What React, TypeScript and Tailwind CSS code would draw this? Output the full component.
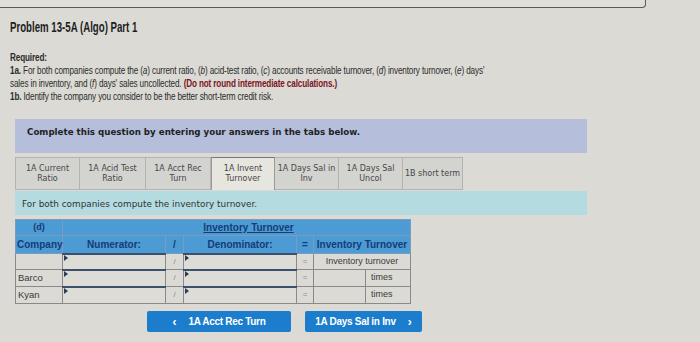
import React from "react";

const tabs = [
  ["1A Current", "Ratio", 65],
  ["1A Acid Test", "Ratio", 66],
  ["1A Acct Rec", "Turn", 65],
  ["1A Invent", "Turnover", 64],
  ["1A Days Sal in", "Inv", 64],
  ["1A Days Sal", "Uncol", 64],
  ["1B short term", "", 60],
] as const;

const rows = [
  { name: "", result: "Inventory turnover", unit: "" },
  { name: "Barco", result: "", unit: "times" },
  { name: "Kyan", result: "", unit: "times" },
];

const InputCell: React.FC = () => (
  <td className="relative border border-[#8a8a8a] border-t-2 border-t-[#3c4f6b] bg-[#dddcd7] p-0">
    <span className="absolute left-[1px] top-0 h-0 w-0 border-t-[3px] border-l-[4px] border-b-[3px] border-t-transparent border-b-transparent border-l-[#2b3d5c]" />
  </td>
);

const App: React.FC = () => {
  const active = 3;
  return (
    <div className="w-[700px] h-[342px] overflow-hidden bg-[#dbdad4] text-[#2a2a2a] font-['Liberation_Sans',Arial,sans-serif]">
      {/* top frame edge */}
      <div className="h-[8px] w-[646px] border-b border-r border-[#5a5a5a] rounded-br-[4px] bg-[#dfded9]" />

      <div className="pl-[10px] pt-[11px]">
        <h1 className="origin-left scale-x-[0.69] font-['Liberation_Sans_Narrow','Liberation_Sans',sans-serif] font-bold text-[14px] leading-[16px] text-[#1e1e1e]">
          Problem 13-5A (Algo) Part 1
        </h1>

        {/* condensed copy, squeezed to the narrow face of the original */}
        <div className="mt-[16px] w-[800px] origin-left scale-x-[0.71] font-['Liberation_Sans_Narrow','Liberation_Sans',sans-serif] text-[11.5px] leading-[13px] tracking-[-0.2px] text-[#2c2c2c]">
          <p className="font-bold">Required:</p>
          <p>
            <b>1a.</b> For both companies compute the (<i>a</i>) current ratio, (<i>b</i>) acid-test ratio, (<i>c</i>) accounts receivable turnover, (<i>d</i>) inventory turnover, (<i>e</i>) days'
            <br />
            sales in inventory, and (<i>f</i>) days' sales uncollected.{" "}
            <b className="text-[#7c1526]">(Do not round intermediate calculations.)</b>
          </p>
          <p>
            <b>1b.</b> Identify the company you consider to be the better short-term credit risk.
          </p>
        </div>
      </div>

      <div className="ml-[15px] mt-[16px] w-[572px] font-['DejaVu_Sans',Verdana,sans-serif]">
        <div className="h-[34px] bg-[#b5bedb] pl-[12px] pt-[7px] text-[8.7px] font-bold text-[#222]">
          Complete this question by entering your answers in the tabs below.
        </div>

        <div className="mt-[4px] flex h-[33px] text-[8px] leading-[10px] text-[#474747]">
          {tabs.map(([a, b, w], i) => (
            <div
              key={a}
              style={{ width: w }}
              className={
                i === active
                  ? "flex flex-col items-center justify-center border border-b-0 border-[#9a9a9a] border-t-dotted border-t-[#777] bg-[#e6e5de] text-center"
                  : "flex flex-col items-center justify-center border border-l-0 border-[#b3b3b0] bg-[#d3d3d0] text-center first:border-l"
              }
            >
              <span>{a}</span>
              {b && <span>{b}</span>}
            </div>
          ))}
        </div>

        <div className="mt-[1px] h-[24px] bg-[#b3dbe0] pl-[7px] pt-[7px] text-[8.9px] text-[#333]">
          For both companies compute the inventory turnover.
        </div>

        <table className="mt-[4px] w-[395px] table-fixed border-collapse font-['Liberation_Sans',Arial,sans-serif] text-[10px]">
          <colgroup>
            <col className="w-[47px]" />
            <col className="w-[103px]" />
            <col className="w-[18px]" />
            <col className="w-[113px]" />
            <col className="w-[17px]" />
            <col className="w-[52px]" />
            <col className="w-[45px]" />
          </colgroup>
          <thead className="bg-[#4c9bd5] font-bold text-[#163c74]">
            <tr className="h-[16px]">
              <th className="border border-[#7a9cbf] text-[9px]">(d)</th>
              <th colSpan={6} className="border border-[#7a9cbf] pl-[24px]">
                <span className="underline">Inventory Turnover</span>
              </th>
            </tr>
            <tr className="h-[18px]">
              <th className="border border-[#7a9cbf] text-left pl-[1px]">Company</th>
              <th className="border border-[#7a9cbf]">Numerator:</th>
              <th className="border border-[#7a9cbf]">/</th>
              <th className="border border-[#7a9cbf]">Denominator:</th>
              <th className="border border-[#7a9cbf]">=</th>
              <th colSpan={2} className="border border-[#7a9cbf]">Inventory Turnover</th>
            </tr>
          </thead>
          <tbody className="text-[#3a3a3a]">
            {rows.map((r, i) => (
              <tr key={i} className={i === 0 ? "h-[16px]" : "h-[17px]"}>
                <td className="border border-[#8a8a8a] pl-[2px] text-[9.5px]">{r.name}</td>
                <InputCell />
                <td className="border border-[#8a8a8a] text-center text-[8px] text-[#888]">/</td>
                <InputCell />
                <td className="border border-[#8a8a8a] text-center text-[8px] text-[#888]">=</td>
                {r.result ? (
                  <td colSpan={2} className="border border-[#8a8a8a] text-center text-[9px]">
                    {r.result}
                  </td>
                ) : (
                  <>
                    <td className="border border-[#8a8a8a]" />
                    <td className="border border-[#8a8a8a] pl-[5px] text-[9px]">{r.unit}</td>
                  </>
                )}
              </tr>
            ))}
          </tbody>
        </table>

        <div className="mt-[7px] ml-[132px] flex gap-[14px] font-['Liberation_Sans_Narrow','Liberation_Sans',sans-serif] text-[10px] font-bold text-white">
          <button className="flex h-[21px] w-[144px] items-center justify-center gap-[12px] rounded-[2px] bg-[#1b7dcb]">
            <span className="text-[12px] leading-none">‹</span>
            <span className="tracking-[-0.3px]">1A Acct Rec Turn</span>
          </button>
          <button className="flex h-[21px] w-[117px] items-center justify-center gap-[12px] rounded-[2px] bg-[#1b7dcb]">
            <span className="tracking-[-0.3px]">1A Days Sal in Inv</span>
            <span className="text-[12px] leading-none">›</span>
          </button>
        </div>
      </div>
    </div>
  );
};

export default App;
